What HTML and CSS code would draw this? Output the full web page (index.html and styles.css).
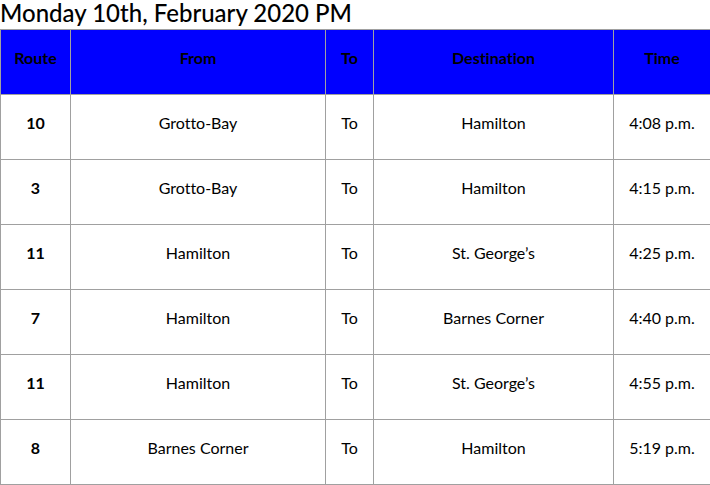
FILE: index.html
```html
<!DOCTYPE html>
<html>
<head>
<meta charset="utf-8">
<link rel="stylesheet" href="styles.css">
</head>
<body>
<h1 class="title">Monday 10th, February 2020 PM</h1>
<table class="schedule">
  <colgroup>
    <col class="c-route"><col class="c-from"><col class="c-to"><col class="c-dest"><col class="c-time">
  </colgroup>
  <thead>
    <tr><th>Route</th><th>From</th><th>To</th><th>Destination</th><th>Time</th></tr>
  </thead>
  <tbody>
    <tr><td class="route">10</td><td>Grotto-Bay</td><td>To</td><td>Hamilton</td><td>4:08 p.m.</td></tr>
    <tr><td class="route">3</td><td>Grotto-Bay</td><td>To</td><td>Hamilton</td><td>4:15 p.m.</td></tr>
    <tr><td class="route">11</td><td>Hamilton</td><td>To</td><td>St. George’s</td><td>4:25 p.m.</td></tr>
    <tr><td class="route">7</td><td>Hamilton</td><td>To</td><td>Barnes Corner</td><td>4:40 p.m.</td></tr>
    <tr><td class="route">11</td><td>Hamilton</td><td>To</td><td>St. George’s</td><td>4:55 p.m.</td></tr>
    <tr><td class="route">8</td><td>Barnes Corner</td><td>To</td><td>Hamilton</td><td>5:19 p.m.</td></tr>
  </tbody>
</table>
</body>
</html>
```
FILE: styles.css
```css
html, body {
  margin: 0;
  padding: 0;
  background: #fff;
  font-family: Lato, "Liberation Sans", sans-serif;
  color: #000;
  font-variant-ligatures: no-common-ligatures;
}
.title {
  margin: 0 0 4px 0;
  font-size: 24px;
  line-height: 25px;
  font-weight: 500;
  color: #000;
}
.schedule {
  width: 710px;
  table-layout: fixed;
  border-collapse: collapse;
  font-size: 16px;
}
.c-route { width: 70px; }
.c-from { width: 255px; }
.c-to { width: 48px; }
.c-dest { width: 240px; }
.c-time { width: 97px; }
.schedule th,
.schedule td {
  border: 1px solid #a0a0a0;
  height: 56px;
  padding: 0 4px 8px 4px;
  text-align: center;
  vertical-align: middle;
  line-height: 18px;
}
.schedule th {
  background: #0000ff;
  color: #000;
  font-weight: 700;
}
.schedule td.route {
  font-weight: 700;
}
```
